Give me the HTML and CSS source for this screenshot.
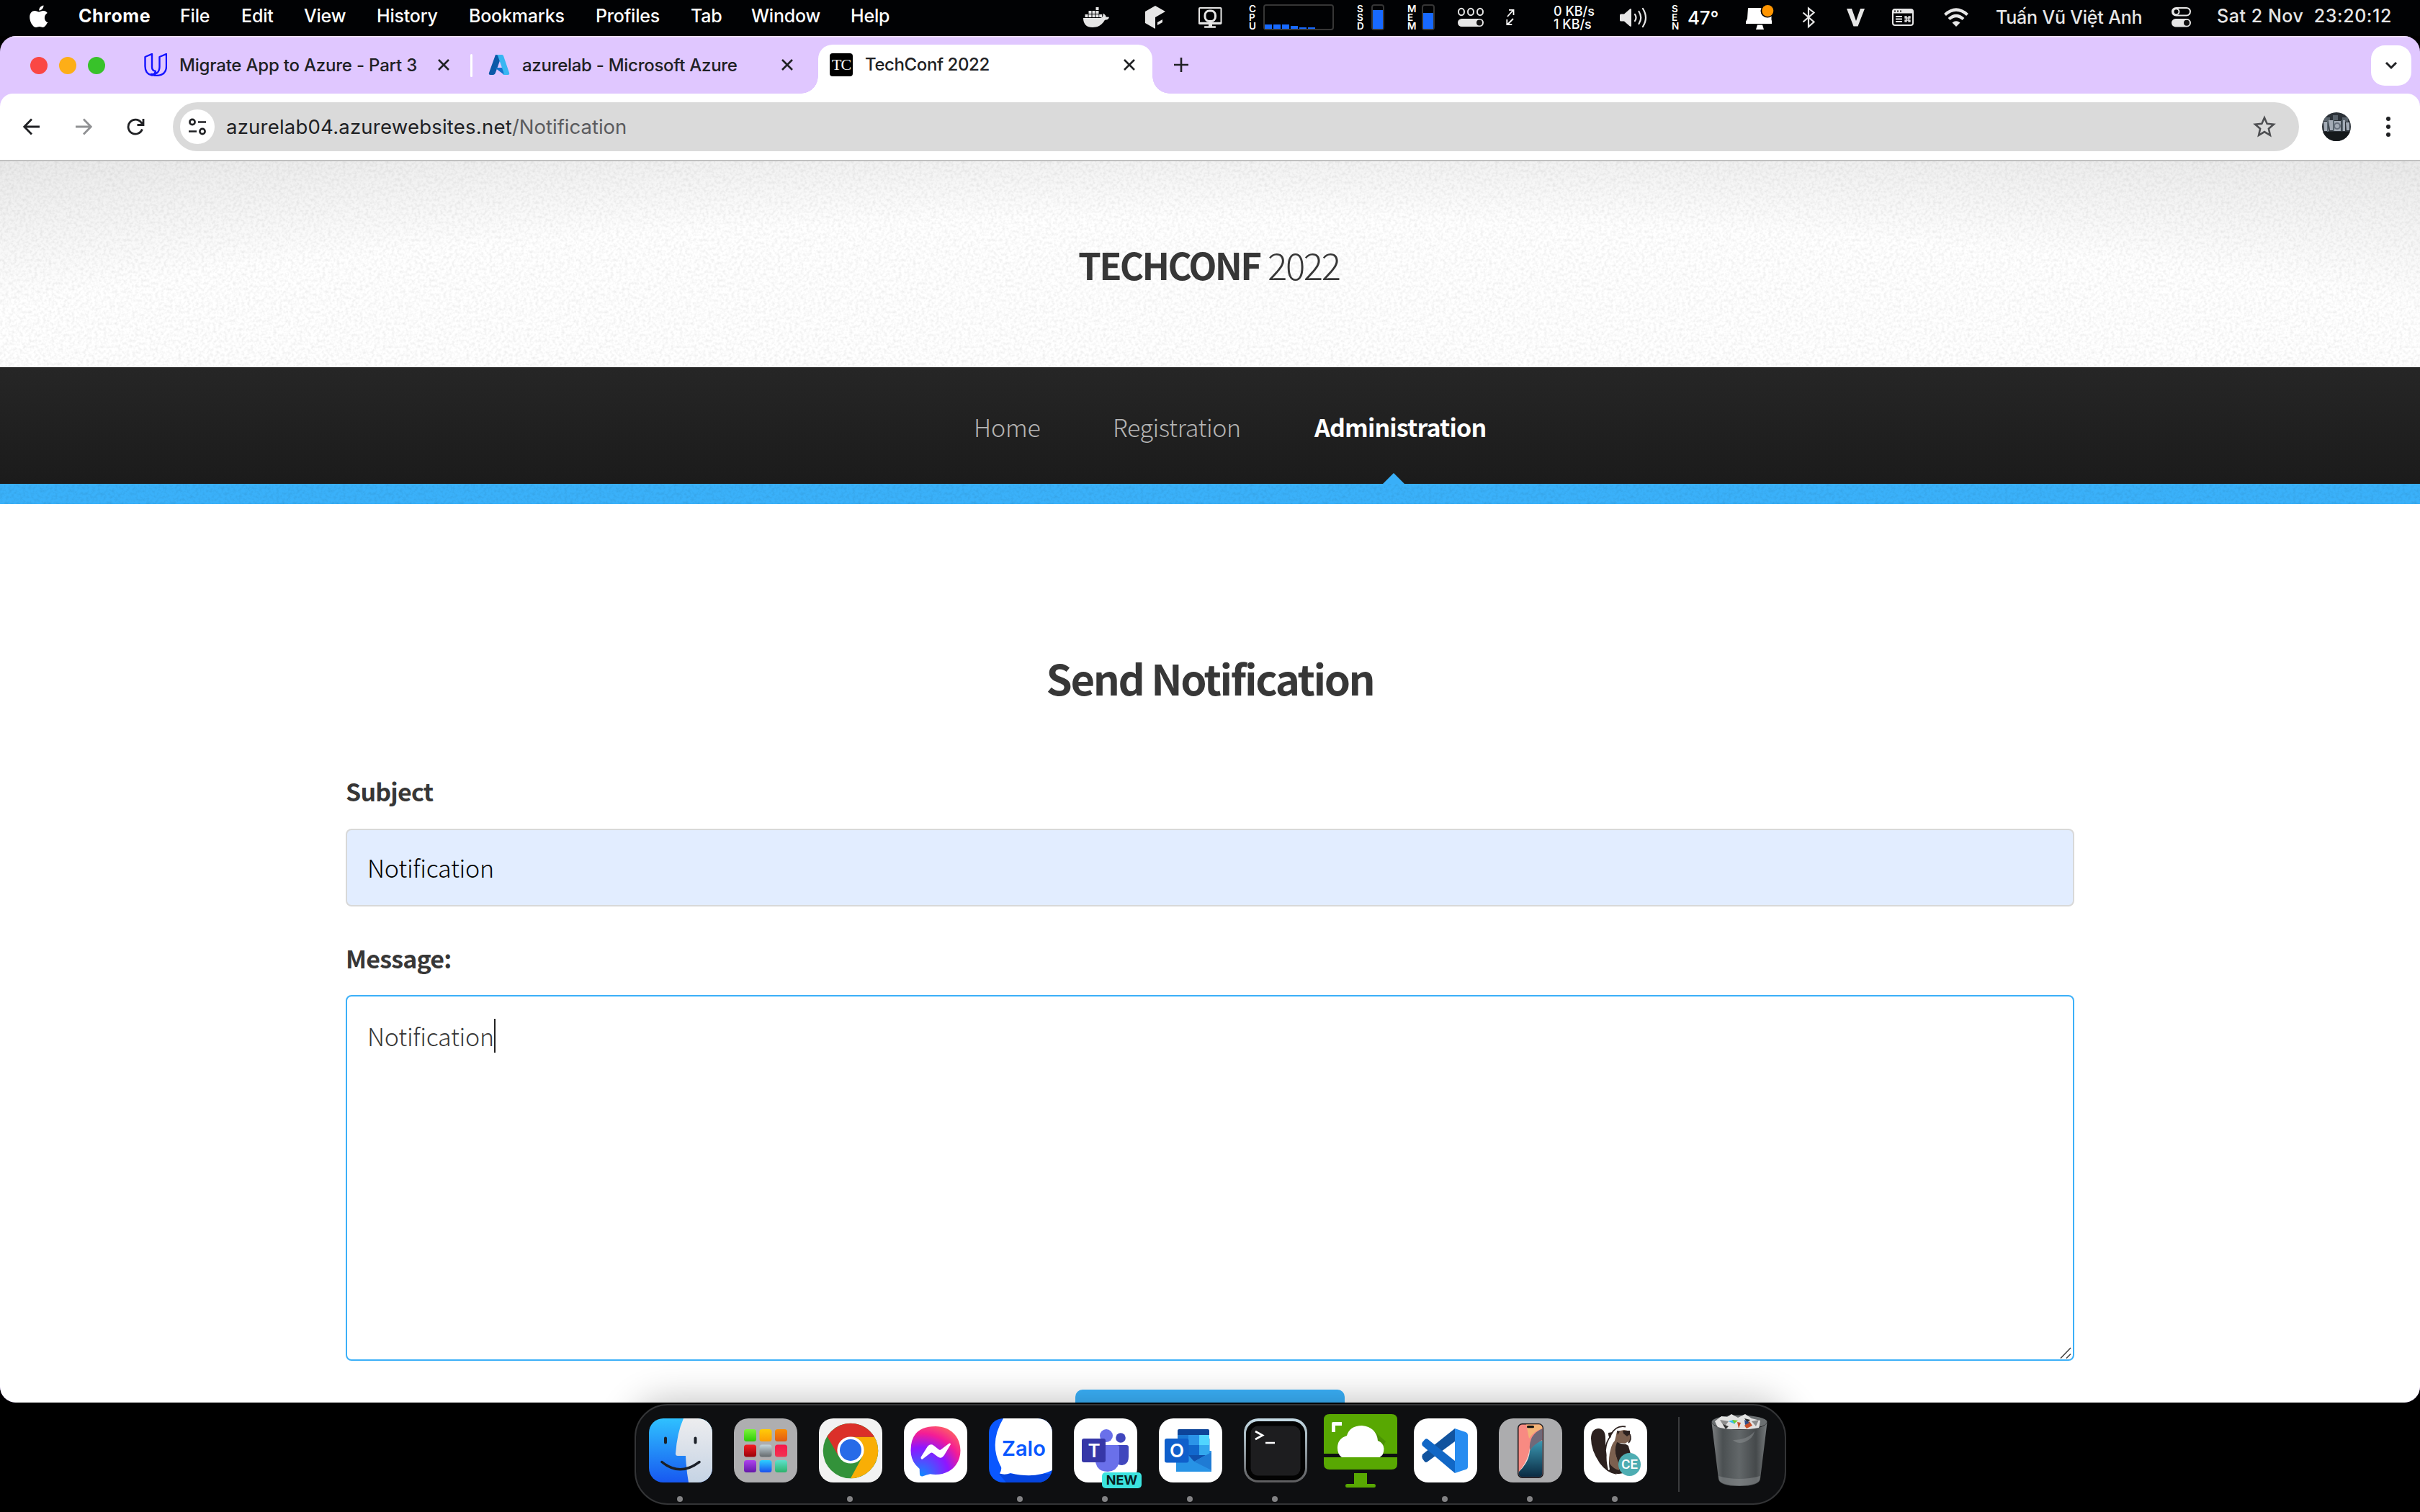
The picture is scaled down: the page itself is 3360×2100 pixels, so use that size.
FILE: index.html
```html
<!DOCTYPE html>
<html lang="en">
<head>
<meta charset="utf-8">
<title>TechConf 2022</title>
<link rel="stylesheet" href="styles.css">
</head>
<body>
<header class="menubar">
  <svg class="mi" width="28" viewBox="41 0 28 50" fill="#fff"><path d="M60.500 7.500c.3 3.600-3 7.200-6.200 7.100-.4-3.500 3-6.900 6.200-7.100zM65.500 32c-1.700 3.600-3.800 6-6 6-1.800 0-2.600-1-4.700-1s-3 1-4.700 1c-4.600 0-9-8.300-8.900-14.300 0-5.400 3.300-8.600 7-8.600 2.600 0 4.400 1.500 5.800 1.500 1.300 0 3.600-1.700 6.500-1.600 2 0 4 1 5.300 2.900-5.700 3.500-4.900 11.600.9 13.600-.3.200-.7.300-1.200.5z"/></svg>
  <b class="m-app">Chrome</b><span>File</span><span>Edit</span><span>View</span><span>History</span><span>Bookmarks</span><span>Profiles</span><span>Tab</span><span>Window</span><span>Help</span>
  <svg class="mi" width="37" viewBox="1504 0 37 50" fill="#e6e6e6"><path d="M1504 25h24c3-.6 4-3 3.500-6.500 3 1.500 4 3.500 4 5l4.500.3c-.8 3-3 4-6 4-4 7.500-10 10.200-17 10.200-8.500 0-13-4.500-13-13z"/><path d="M1506.500 20h4v4h-4zm5 0h4v4h-4zm5 0h4v4h-4zm5 0h4v4h-4zm4.700 0h4v4h-4zm-14.700-5h4v4h-4zm5 0h4v4h-4zm5 0h4v4h-4zm0-5h4v4h-4z"/></svg>
  <svg class="mi" width="28" viewBox="1590 0 28 50" fill="#e6e6e6"><path d="M1604 8l14 8-14 8v16l-14-8V16zM1607 31l7-4v4l-7 4z"/></svg>
  <svg class="mi" width="33" viewBox="1664 0 33 50" fill="none" stroke="#e6e6e6" stroke-width="2"><rect x="1665" y="11" width="30.500" height="22" rx="1"/><path d="M1665 32h30M1673 37.500h14" stroke-width="2.600" stroke-linecap="round"/><path d="M1680.500 33v4" stroke-width="5"/><rect x="1673" y="15" width="14.500" height="14.500" rx="6" stroke-width="3"/></svg>
  <div class="stat"><span class="vlabel">C<br>P<br>U</span><svg width="98" height="50" viewBox="1754 0 98 50"><rect x="1755" y="7" width="96" height="34" rx="3" fill="none" stroke="#363636" stroke-width="2"/><path fill="#1769ff" d="M1756 34h10v6h-10zm12 0h10v6h-10zm12 0h10v6h-10zm12 2h10v4h-10zm12 2h10v2h-10zm12 0h10v2h-10z"/></svg></div>
  <div class="stat"><span class="vlabel">S<br>S<br>D</span><svg width="18" height="50" viewBox="1904 0 18 50"><rect x="1905" y="7" width="16" height="34" rx="3" fill="none" stroke="#363636" stroke-width="2"/><path fill="#1769ff" d="M1906 14h14v26h-14z"/></svg></div>
  <div class="stat"><span class="vlabel">M<br>E<br>M</span><svg width="18" height="50" viewBox="1974 0 18 50"><rect x="1975" y="7" width="16" height="34" rx="3" fill="none" stroke="#363636" stroke-width="2"/><path fill="#1769ff" d="M1976 18h14v22h-14z"/></svg></div>
  <svg class="mi" width="37" viewBox="2024 0 37 50"><g fill="none" stroke="#e6e6e6" stroke-width="2"><ellipse cx="2029" cy="16.500" rx="4" ry="4.800"/><ellipse cx="2042" cy="16.500" rx="4" ry="4.800"/><ellipse cx="2055" cy="16.500" rx="4" ry="4.800"/></g><rect x="2024" y="26" width="36" height="11" rx="5.500" fill="#e6e6e6"/><circle cx="2054" cy="31.500" r="4" fill="#111"/></svg>
  <svg class="mi" width="12" viewBox="2091 0 12 50" fill="none" stroke="#fff" stroke-width="1.800"><path d="M2093 23l8-9M2095 13.800h6.500V21M2101 26l-8 8M2092.300 27v7.200h7"/></svg>
  <span class="net">0 KB/s<br>1 KB/s</span>
  <svg class="mi" width="40" viewBox="2248 0 40 50" fill="none" stroke="#e6e6e6" stroke-width="2.200" stroke-linecap="round"><path fill="#e6e6e6" stroke="none" d="M2249 21q0-1.500 1.500-1.500h4.500l8-7q2-1.300 2 1v22q0 2.300-2 1l-8-7h-4.500q-1.500 0-1.500-1.500z"/><path d="M2270 20q3 4.500 0 9M2275.500 16q5.500 8.500 0 17M2281 12q8 12.500 0 25"/></svg>
  <div class="stat sen"><span class="vlabel">S<br>E<br>N</span><span class="temp">47°</span></div>
  <svg class="mi" width="40" viewBox="2424 0 40 50"><path fill="#fff" d="M2427 11h20l13 18v4h-36v-3l2-4zM2440 34.500h7l2 6.500h-11z"/><path d="M2457 22v8" stroke="#fff" stroke-width="5"/><circle cx="2454" cy="15" r="9.500" fill="#000"/><circle cx="2454.300" cy="15" r="8" fill="#ff9500"/></svg>
  <svg class="mi" width="20" viewBox="2501 0 20 50" fill="none" stroke="#e6e6e6" stroke-width="2.200"><path d="M2503.500 17.500l15 13-7.500 6.500V11.500l7.500 6-15 13"/></svg>
  <svg class="mi" width="27" viewBox="2563 0 27 50" fill="#e6e6e6"><path d="M2564 12h7l6 17 6-17h6l-9.500 24.500h-6z"/></svg>
  <svg class="mi" width="32" viewBox="2626 0 32 50" fill="none" stroke="#e6e6e6" stroke-width="2"><rect x="2628" y="13" width="28" height="22" rx="3"/><path stroke-width="5" d="M2628 16h28"/><path stroke="#222" d="M2630 15.500h2m2 0h2m2 0h2"/><path d="M2632 23h9m-9 3.500h9m-9 3.500h9"/><path stroke-width="1.300" d="M2645 23h2v7h-2v-2h7v2h-2v-7h2v2h-7z"/></svg>
  <svg class="mi" width="36" viewBox="2698 0 36 50" fill="none" stroke="#e6e6e6" stroke-width="4.200"><path d="M2700.500 20.500q15.500-14 31 0M2706 26.500q10-9 20 0"/><path fill="#e6e6e6" stroke="none" d="M2710.500 31.500q5.500-4.500 11 0L2716 37z"/></svg>
  <span class="user">Tuấn Vũ Việt Anh</span>
  <svg class="mi" width="28" viewBox="3014 0 28 50" fill="none" stroke="#e6e6e6" stroke-width="2"><rect x="3016" y="11" width="25" height="10.500" rx="5.200"/><circle cx="3021.500" cy="16.200" r="4" /><rect x="3015" y="26" width="27" height="11.500" rx="5.700" fill="#e6e6e6" stroke="none"/><circle cx="3036" cy="31.700" r="4" fill="#111" stroke="none"/></svg>
  <span class="clock">Sat 2 Nov&nbsp; 23:20:12</span>
</header>

<main class="window">
  <div class="tabstrip">
    <div class="lights"><i class="red"></i><i class="amber"></i><i class="green"></i></div>
    <div class="tab tab-a">
      <svg width="32" height="32" viewBox="0 0 32 32" fill="none" stroke="#1414ff" stroke-width="2.400" stroke-linejoin="round"><path d="M1.500 5L11 1v18q0 5 5 6-2 5.500-5 5.500Q1.500 29 1.500 18zM21.500 5L31 1v17q0 12-13 13-6 0-8-2 11 1 11.500-10z"/></svg>
      <span class="t">Migrate App to Azure - Part 3</span>
      <svg class="x" width="18" height="18" viewBox="0 0 18 18"><path d="M2 2l14 14M16 2L2 16"/></svg>
    </div>
    <i class="sep"></i>
    <div class="tab tab-b">
      <svg width="30" height="30" viewBox="0 0 30 30"><path fill="#0c58a8" d="M10 1h9L10 26q-1 3-3 3H3q-3 0-2-3z"/><path fill="#1272cc" d="M9 19h15l3 10h-5z"/><path fill="#38b6f2" d="M11 1h8q1.500 0 2 1.500L29 26q1 3-2 3h-7q2-1 1-4L13 2z"/></svg>
      <span class="t">azurelab - Microsoft Azure</span>
      <svg class="x" width="18" height="18" viewBox="0 0 18 18"><path d="M2 2l14 14M16 2L2 16"/></svg>
    </div>
    <div class="tab tab-on">
      <span class="fav">TC</span>
      <span class="t">TechConf 2022</span>
      <svg class="x" width="18" height="18" viewBox="0 0 18 18"><path d="M2 2l14 14M16 2L2 16"/></svg>
    </div>
    <svg class="plus" width="22" height="22" viewBox="0 0 22 22"><path d="M11 1v20M1 11h20"/></svg>
    <div class="tabsearch"><svg width="18" height="12" viewBox="0 0 18 12"><path d="M2 2l7 7 7-7"/></svg></div>
  </div>
  <div class="toolbar">
    <svg class="nav-i" width="24" height="24" viewBox="0 0 24 24"><path d="M23 12H2M12 1.500L1.800 12 12 22.500"/></svg>
    <svg class="nav-i off" width="24" height="24" viewBox="0 0 24 24"><path d="M1 12h21M12 1.500L22.200 12 12 22.500"/></svg>
    <svg class="nav-i" width="25" height="25" viewBox="0 0 25 25"><path d="M21.500 15.500A10 10 0 1 1 20 6l2.500 3M23 1v8.500h-8.500"/></svg>
    <div class="omnibox">
      <div class="site"><svg width="26" height="26" viewBox="0 0 26 26" fill="none" stroke="#202124" stroke-width="2.600"><circle cx="6" cy="6.500" r="3.600"/><path d="M14 6.500h11M1 19.500h11"/><circle cx="20" cy="19.500" r="3.600"/></svg></div>
      <span class="url"><span class="host">azurelab04.azurewebsites.net</span><span class="path">/Notification</span></span>
      <svg class="star" width="32" height="32" viewBox="0 0 32 32"><path d="M16 3.500l3.700 8.400 9.100.9-6.900 6 2 9-7.900-4.700L8.100 27.800l2-9-6.900-6 9.100-.9z"/></svg>
    </div>
    <svg class="avatar" width="40" height="40" viewBox="0 0 40 40"><defs><clipPath id="av"><circle cx="20" cy="20" r="20"/></clipPath></defs><g clip-path="url(#av)"><path fill="#2b3138" d="M0 0h40v40H0z"/><path fill="#59626b" d="M3 7h8v5H3zm12-3h7v7h-7zm13 3h8v6h-8z"/><path fill="#a3abb6" d="M2 13h5l3 13H3zm7-2h6v14h-4zm8 1h9v14h-9zm11-1h4v15h-4zm5 3h5v11h-4z"/><path fill="#15191c" d="M0 27h40v13H0z"/><circle cx="21" cy="19" r="4" fill="none" stroke="#68717e" stroke-width="2"/><path stroke="#59656f" stroke-width="2" d="M8 12v15m8-17v16m12-15v15"/></g></svg>
    <div class="kebab"><i></i><i></i><i></i></div>
  </div>
  <section class="page">
    <div class="masthead"><h1><b>TECHCONF</b><span class="year">2022</span></h1></div>
    <nav class="nav"><a class="n1">Home</a><a class="n2">Registration</a><a class="n3">Administration</a></nav>
    <div class="stripe"></div>
    <div class="content">
      <h2>Send Notification</h2>
      <label>Subject</label>
      <div class="field subject"><span>Notification</span></div>
      <label>Message:</label>
      <div class="field message"><span>Notification</span><i class="caret"></i>
        <svg class="grip" width="16" height="16" viewBox="0 0 16 16"><path d="M1 15.500L15 1M9 15.500l6-6"/></svg></div>
      <div class="button"></div>
    </div>
  </section>
</main>

<footer class="dock">
  <div class="app run"><svg viewBox="0 0 88 89"><defs><linearGradient id="fb" x2="0" y2="1"><stop stop-color="#2fc1ff"/><stop offset="1" stop-color="#1758f0"/></linearGradient><linearGradient id="fw" x2="0" y2="1"><stop stop-color="#ededef"/><stop offset="1" stop-color="#c5d3e4"/></linearGradient><clipPath id="sq"><rect width="88" height="89" rx="20"/></clipPath></defs><g clip-path="url(#sq)"><path fill="url(#fb)" d="M0 0h88v89H0z"/><path fill="url(#fw)" d="M48 0h40v89H55q-3-16-4-37H40q-3 0-3-3Q39 20 48 0z"/></g><g fill="none" stroke="#1b2028" stroke-width="3.500" stroke-linecap="round"><path d="M23 27.500v6M64.500 27.500v6" stroke-width="4"/><path d="M18 60.500Q43 81 70 60.500"/></g></svg></div>
  <div class="app"><svg viewBox="0 0 88 89"><defs><linearGradient id="c1" x2="0" y2="1"><stop stop-color="#7df33c"/><stop offset="1" stop-color="#2ccc08"/></linearGradient><linearGradient id="c2" x2="0" y2="1"><stop stop-color="#ffcc08"/><stop offset="1" stop-color="#fb9c06"/></linearGradient><linearGradient id="c3" x2="0" y2="1"><stop stop-color="#f98e06"/><stop offset="1" stop-color="#e25a14"/></linearGradient><linearGradient id="c4" x2="0" y2="1"><stop stop-color="#f51d25"/><stop offset="1" stop-color="#980208"/></linearGradient><linearGradient id="c5" x2="0" y2="1"><stop stop-color="#c4d6de"/><stop offset="1" stop-color="#64696c"/></linearGradient><linearGradient id="c6" x2="0" y2="1"><stop stop-color="#f7164a"/><stop offset="1" stop-color="#f23352"/></linearGradient><linearGradient id="c7" x2="0" y2="1"><stop stop-color="#ae42ee"/><stop offset="1" stop-color="#6418a8"/></linearGradient><linearGradient id="c8" x2="0" y2="1"><stop stop-color="#2cd0ff"/><stop offset="1" stop-color="#1b50ee"/></linearGradient><linearGradient id="c9" x2="0" y2="1"><stop stop-color="#5de0cb"/><stop offset="1" stop-color="#2cb26b"/></linearGradient></defs><rect width="88" height="89" rx="20" fill="#aeaeb0"/><rect x="14" y="15" width="17" height="17" rx="3.500" fill="url(#c1)"/><rect x="35.500" y="15" width="17" height="17" rx="3.500" fill="url(#c2)"/><rect x="57" y="15" width="17" height="17" rx="3.500" fill="url(#c3)"/><rect x="14" y="36.500" width="17" height="17" rx="3.500" fill="url(#c4)"/><rect x="35.500" y="36.500" width="17" height="17" rx="3.500" fill="url(#c5)"/><rect x="57" y="36.500" width="17" height="17" rx="3.500" fill="url(#c6)"/><rect x="14" y="58" width="17" height="17" rx="3.500" fill="url(#c7)"/><rect x="35.500" y="58" width="17" height="17" rx="3.500" fill="url(#c8)"/><rect x="57" y="58" width="17" height="17" rx="3.500" fill="url(#c9)"/></svg></div>
  <div class="app run"><svg viewBox="0 0 88 89"><rect width="88" height="89" rx="20" fill="#f2f2f2"/><circle cx="44" cy="45" r="38.300" fill="#33923a"/><path fill="#f9ae05" d="M44 83.300a38.300 38.300 0 0 0 33-57.500H44l16 28z"/><path fill="#db3029" d="M11.500 25A38.300 38.300 0 0 1 77 25.800H44L27 52z"/><circle cx="44" cy="44" r="18.600" fill="#fff"/><circle cx="44" cy="44" r="15" fill="#276be8"/></svg></div>
  <div class="app"><svg viewBox="0 0 88 89"><defs><radialGradient id="ms" cx=".2" cy="1" r="1.150"><stop stop-color="#0d8bff"/><stop offset=".5" stop-color="#8e16ff"/><stop offset=".75" stop-color="#f41d95"/><stop offset="1" stop-color="#ff6a5c"/></radialGradient></defs><rect width="88" height="89" rx="20" fill="#fff"/><path fill="url(#ms)" d="M44 11c20 0 34.500 14 34.500 33.500S64 78 44 78q-4 0-7.500-.8-5 1-10 3-4 1-4.500-2.200l-.3-8Q9.500 60 9.500 44.500 9.500 11 44 11z"/><path fill="#fff" d="M23.500 54l9-14.500q4-5.500 9-1.800l7 5.500q1.500 1 3 0l10.500-8q2.500-1.500 3 .8L56 51q-4 6-9 2.200l-7-5.300q-1.500-1-3 0l-11 8.500q-2.500 1.300-2.500-2.400z"/></svg></div>
  <div class="app run"><svg viewBox="0 0 88 89"><g clip-path="url(#sq)"><path fill="#0a57ff" d="M0 0h88v89H0z"/><path fill="#0545df" d="M14 77h74v12H24z"/><path fill="#fff" d="M20 0h68v72Q64 84 30 76q-8 3-15 .5 3-5 2-9Q-1 35 20 0z"/></g></svg><span class="zalo">Zalo</span></div>
  <div class="app run"><svg viewBox="0 0 88 89"><rect width="88" height="89" rx="20" fill="#fff"/><circle cx="65" cy="27" r="6.800" fill="#4046bd"/><path fill="#4046bd" d="M58 37h15q3 0 3 3v13q0 11-9 12-6 0-9-4z"/><circle cx="45" cy="24" r="9" fill="#6a70ea"/><path fill="#6a70ea" d="M30 37h30q3 0 3 3v18q-1 15-16 16-15 0-17-14z"/><rect x="11" y="28" width="33" height="33" rx="3" fill="#3637a8"/></svg><span class="tile-t">T</span><span class="new">NEW</span></div>
  <div class="app run"><svg viewBox="0 0 88 89"><rect width="88" height="89" rx="20" fill="#fff"/><path fill="#2b94e8" d="M24 50V28h49v46H24z"/><path fill="#0d4499" d="M26 17q0-2 2-2h40q2 0 2 2v6H26z"/><path fill="#1b78d4" d="M26 23h15v14H26z"/><path fill="#2b94e8" d="M41 23h15v14H41z"/><path fill="#50d5ff" d="M56 23h14v14H56z"/><path fill="#fff" d="M70.500 23h3v22h-3z"/><path fill="#1167cc" d="M26 37h30v14H41z"/><path fill="#33a8ee" d="M56 37h14v14H56z"/><path fill="#0f50ad" d="M41 51h24L49 60z"/><path fill="#2793e6" d="M41 55l32 19H26q-2 0-2-2v-8z"/><path fill="#1f7bd4" d="M73 47v25L49 60z"/><rect x="8" y="28" width="33.500" height="33.500" rx="3" fill="#0f5fcb"/></svg><span class="tile-o">O</span></div>
  <div class="app run"><svg viewBox="0 0 88 89"><defs><linearGradient id="tm" x2="0" y2="1"><stop stop-color="#c5dbe6"/><stop offset="1" stop-color="#5d5d5f"/></linearGradient></defs><rect width="88" height="89" rx="20" fill="url(#tm)"/><rect x="3" y="4" width="82" height="82" rx="17" fill="#030303"/><rect x="9.500" y="10.500" width="69" height="69" rx="10" fill="#1d1d1f"/><path fill="none" stroke="#fff" stroke-width="2.600" d="M16 18l10 5.500L16 29M30 34h13"/></svg></div>
  <div class="app wide"><svg viewBox="0 0 102 103"><path fill="#58a802" d="M8 0h86q8 0 8 8v47H0V8q0-8 8-8zM0 60h102v9q0 8-8 8H8q-8 0-8-8zM42 82h18v15h10q2 0 2 2.500t-2 2.500H32q-2 0-2-2.500t2-2.500h10z"/><path fill="#4b9104" d="M70 24l16 14-6 10H66z"/><path fill="#fff" d="M11 25V13q0-2 2-2h12v5H16v9zM25 60q-6-4-6-13 0-13 13-17 4-14 21-14 20 2 22 21 8 3 8.500 11 0 9-6 12z"/></svg></div>
  <div class="app run"><svg viewBox="0 0 88 89"><rect width="88" height="89" rx="20" fill="#fff"/><path fill="#11539e" d="M12 50L57 14v18L18.500 60.500q-2 1-3.500-.5l-3-4q-1.500-3 0-6z"/><path fill="#1167c6" d="M12 38q-1.500-3 0-5l3.500-4q2-1.500 4 0L57 59v17z"/><path fill="#278cf0" d="M57 14l15 5q3 1.500 3 4v44q0 3-3 4l-15 5z"/></svg></div>
  <div class="app run"><svg viewBox="0 0 88 89"><defs><clipPath id="ip"><rect x="27.500" y="8.500" width="33" height="73" rx="5"/></clipPath><linearGradient id="ib" x2="0" y2="1"><stop stop-color="#3c9ab4"/><stop offset="1" stop-color="#08263e"/></linearGradient></defs><rect width="88" height="89" rx="20" fill="#acacae"/><rect x="26" y="7" width="36" height="76" rx="6.500" fill="#121316"/><g clip-path="url(#ip)"><path fill="#f88a82" d="M27 8h34v74H27z"/><path fill="#f3b477" d="M38 8h23v6q-12 3-19 14z"/><path fill="#706979" d="M61 14v15L43 44q-2-22 18-30z"/><path fill="#f1dedb" d="M27 75q14-16 16-34v9L34 80z"/><path fill="url(#ib)" d="M61 30Q48 36 43 45q-1 16-16 30v8h34z"/></g><rect x="39" y="10" width="10" height="3.300" rx="1.600" fill="#111"/></svg></div>
  <div class="app run"><svg viewBox="0 0 88 89"><rect width="88" height="89" rx="20" fill="#fff"/><path fill="#2c211f" d="M20 14q10 0 10 14 0 14 2 24 4 18 14 26-14-2-24-16Q10 44 10 28q0-13 10-14z"/><path fill="none" stroke="#2c211f" stroke-width="1.800" d="M38 22q7-13 20-10.500M30 44q1-12 7-19"/><path fill="#2c211f" d="M34 20l6-1-3 8q-3 0-3-7zM33 70q8 8 16 7l6-1-6-30H34q-3 12-1 24z"/><path fill="#fff" d="M34 72q-5-20 0-34l4-5 5 4q-7 8-8 22 0 8 1 12z"/><path fill="#7c604f" d="M46 18l10-2q10 0 9 13-1 7-6 6-6-1-12-1-6 10 2 30v8q-8-2-13-9-2-10 1-19 2-9 6-13 2-8 3-13z"/><path fill="#2c211f" d="M54 17h10v5l-4 3-5-4zM46 17l4 1-3 5zM46 33q9 4 15 2l4 14-3 20-12-7q-10-14-4-29z"/><path fill="#fff" d="M57 35l5-3v6z"/><path stroke="#2c211f" stroke-width="1.500" fill="none" d="M64 22q3 7-2 12"/><ellipse cx="63.500" cy="64" rx="15.500" ry="16" fill="#4eadb2"/></svg><span class="ce">CE</span></div>
  <i class="divider"></i>
  <div class="trash"><svg width="78" height="103" viewBox="0 0 78 103"><defs><linearGradient id="tr"><stop stop-color="#7b7e80"/><stop offset=".2" stop-color="#4b5052"/><stop offset=".5" stop-color="#626769"/><stop offset=".8" stop-color="#45494b"/><stop offset="1" stop-color="#777b7d"/></linearGradient></defs><ellipse cx="39" cy="13" rx="38.500" ry="9.500" fill="#6b6f71"/><path fill="#e2e2e2" d="M5 12l9-7 8 1 6-4 9 5 10-5 9 6 12 3-2 12H10z"/><path fill="#8d8d8d" d="M12 10l12 2-6 8zm44 2l10-2-4 9z"/><path fill="#333" d="M16 16l8 3-4 4zm30-8l8 2-4 4z"/><path fill="#35bcee" d="M24 12l7-2 2 6z"/><path fill="#6fce30" d="M29 10l8 1-5 4z"/><path fill="#c7502a" d="M36 13l5 1-3 8zm10 5l7-6 4 6-8 4z"/><path fill="#2c4d8b" d="M46 10l7 4-6 3z"/><path fill="url(#tr)" d="M.5 14Q5 23 39 23.500 73 23 77.500 14L68 92q-1 10-29 10T10 92z"/><path fill="#8b9092" opacity=".5" d="M10 88q28 8 58 0l-1 5q-2 8-28 8t-28-8zM30 38q20 0 30-12-2 10-14 15-10 3-16-3z"/></svg></div>
</footer>
</body>
</html>
```
FILE: styles.css
```css
* { box-sizing: border-box; }
body { margin: 0; width: 3360px; height: 2100px; overflow: hidden; background: #000; font-family: Inter, "Noto Sans", sans-serif; position: relative; }
i { display: block; }
svg { display: block; flex: none; }

.menubar { height: 50px; padding-left: 41px; background: #010204; color: #fff; display: grid; grid-template-columns: 68px 141px 85px 87px 101px 128px 176px 132px 84px 138px 323px 86px 74px 70px 150px 70px 70px 67px 66px 91px 73px 103px 77px 62px 63px 72px 73px 243px 64px 1fr; font-size: 25px; line-height: 45px; white-space: nowrap; font-weight: 500; letter-spacing: -.2px; }
.menubar b { font-weight: 700; letter-spacing: .6px; }
.mi { height: 50px; }
.stat { display: flex; justify-content: flex-start; }
.vlabel { width: 20px; font-size: 13.5px; line-height: 12px; padding-top: 6px; font-weight: 600; letter-spacing: 0; }
.net { font-size: 18px; line-height: 18px; padding-top: 7px; letter-spacing: 0; }
.sen .vlabel { width: 22px; }
.temp { line-height: 49px; font-size: 26px; }
.user, .clock { color: #e6e6e6; }
.user { line-height: 48px; }
.clock { letter-spacing: .55px; }

.window { height: 1898px; border-radius: 22px; overflow: hidden; background: #e0c7ff; display: flex; flex-direction: column; }
.tabstrip { height: 80px; flex: none; display: flex; align-items: center; border-top: 2px solid #ecdcff; font-size: 24px; font-weight: 500; color: #202124; white-space: nowrap; }
.lights { display: flex; gap: 16px; margin-left: 42px; width: 158px; }
.lights i { width: 24px; height: 24px; border-radius: 50%; }
.red { background: #fa4744; }
.amber { background: #fdae17; }
.green { background: #38c22a; }
.tab { display: flex; align-items: center; padding-bottom: 2px; }
.tab-a { width: 453px; letter-spacing: -.2px; }
.tab-b { width: 458px; margin-left: 22px; letter-spacing: -.28px; }
.tab-on { position: relative; width: 464px; height: 68px; margin-top: 10px; padding: 0 23px 13px 16px; background: #fff; border-radius: 20px 20px 0 0; letter-spacing: -.4px; }
.tab-on::before, .tab-on::after { content: ""; position: absolute; bottom: 0; width: 24px; height: 24px; }
.tab-on::before { left: -24px; background: radial-gradient(circle at 0 0, transparent 23.500px, #fff 24px); }
.tab-on::after { right: -24px; background: radial-gradient(circle at 100% 0, transparent 23.500px, #fff 24px); }
.t { margin-left: 17px; flex: 1; }
.tab-a .t { width: 358px; flex: none; }
.tab-b .t { width: 359px; flex: none; }
.x, .plus, .tabsearch svg { fill: none; stroke: #202124; stroke-width: 2.6; }
.sep { width: 3px; height: 32px; background: #fff; border-radius: 2px; }
.fav { width: 32px; height: 32px; background: #000; color: #fff; border-radius: 4px; font: 22px/32px "Liberation Serif", serif; text-align: center; letter-spacing: -1px; }
.plus { margin: 0 0 2px 29px; }
.tabsearch { width: 56px; height: 56px; margin: 0 12px 0 auto; border-radius: 19px; background: #fff; display: flex; align-items: center; justify-content: center; }
.tabsearch svg { stroke-width: 3; }

.toolbar { height: 94px; flex: none; background: #fff; border-bottom: 2px solid #c0c0c0; border-radius: 18px 18px 0 0; display: flex; align-items: center; padding-left: 32px; }
.nav-i { fill: none; stroke: #202124; stroke-width: 2.8; margin-right: 48px; }
.nav-i.off { stroke: #909193; }
.nav-i:nth-child(3) { margin-right: 39px; }
.omnibox { width: 2952px; height: 68px; border-radius: 34px; background: #dadada; display: flex; align-items: center; padding: 0 32px 0 10px; }
.site { width: 48px; height: 48px; border-radius: 50%; background: #fff; display: flex; align-items: center; justify-content: center; }
.url { margin-left: 16px; flex: 1; font-size: 27.5px; color: #202124; }
.host { letter-spacing: .22px; }
.path { color: #5a5b5e; }
.star { fill: none; stroke: #4e4f52; stroke-width: 2.600; }
.avatar { margin-left: 32px; }
.kebab { margin-left: 49px; display: flex; flex-direction: column; gap: 5px; }
.kebab i { width: 6px; height: 6px; border-radius: 50%; background: #202124; }

.page { height: 1724px; background: #fff; color: #373737; font-family: "Noto Sans CJK SC", sans-serif; font-weight: 300; border-radius: 0 0 22px 22px; overflow: hidden; }
.masthead { height: 286px; background: url("data:image/svg+xml,%3Csvg xmlns='http://www.w3.org/2000/svg' width='400' height='400'%3E%3Cfilter id='n'%3E%3CfeTurbulence type='fractalNoise' baseFrequency='.25' numOctaves='3' stitchTiles='stitch'/%3E%3CfeColorMatrix values='0 0 0 0 0 0 0 0 0 0 0 0 0 0 0 .14 0 0 0 -.055'/%3E%3C/filter%3E%3Crect width='400' height='400' filter='url(%23n)'/%3E%3C/svg%3E"), radial-gradient(ellipse 2400px 300px at 50% 112%, #fff 0, #fff 80%, #e8e8e8 130%); }
h1 { margin: 0; padding-left: 1497px; display: flex; font-size: 51px; line-height: 74px; padding-top: 106px; font-weight: 300; letter-spacing: -2.400px; }
h1 b { width: 263px; font-weight: 700; letter-spacing: -2.700px; }
.nav { height: 162px; background: linear-gradient(#262626, #1b1b1b); display: flex; padding-left: 1352px; font-size: 34px; line-height: 50px; padding-top: 58px; color: #b4b4b4; position: relative; }
.nav::after { content: ""; position: absolute; left: 1920px; bottom: 0; border: 15px solid transparent; border-top: 0; border-bottom-color: #39aff8; }
.n1 { width: 193px; letter-spacing: -.2px; }
.n2 { width: 280px; letter-spacing: -.4px; }
.n3 { color: #fff; font-weight: 700; letter-spacing: -.85px; }
.stripe { height: 28px; background: url("data:image/svg+xml,%3Csvg xmlns='http://www.w3.org/2000/svg' width='400' height='28'%3E%3Cfilter id='n'%3E%3CfeTurbulence type='fractalNoise' baseFrequency='.25' numOctaves='3' stitchTiles='stitch'/%3E%3CfeColorMatrix values='0 0 0 0 0 0 0 0 0 0 0 0 0 0 0 .14 0 0 0 -.055'/%3E%3C/filter%3E%3Crect width='400' height='28' filter='url(%23n)'/%3E%3C/svg%3E"), #3ab1fa; }
.content { width: 2400px; margin: 0 auto; padding-top: 191px; font-size: 34px; }
h2 { margin: 0; text-align: center; font-size: 58px; line-height: 100px; font-weight: 700; letter-spacing: -2.400px; }
label { display: block; font-weight: 700; line-height: 50px; letter-spacing: -.8px; }
h2 + label { padding-top: 83px; }
.field { border: 2px solid #d8d8d8; border-radius: 8px; padding-left: 28px; display: flex; letter-spacing: -.27px; }
.subject { margin-top: 27px; height: 108px; background: #e2edff; color: #000; line-height: 103px; }
.subject + label { padding-top: 47px; }
.message { margin-top: 26px; height: 508px; border-color: #3cb0f8; position: relative; padding-top: 31px; line-height: 48px; }
.caret { width: 2px; height: 47px; background: #222; }
.grip { position: absolute; right: 2px; bottom: 1px; stroke: #444; stroke-width: 1.600; fill: none; }
.button { width: 374px; height: 100px; margin: 40px auto 0; border-radius: 10px; background: #3ab1fa; }

.dock { position: absolute; left: 881px; top: 1950px; width: 1599px; height: 140px; border: 2px solid #333436; border-radius: 46px; background: #0e0f11; box-shadow: 0 0 50px 6px rgba(0,0,0,.24); display: flex; align-items: flex-start; padding: 18px 0 0 18px; }
.app { position: relative; width: 88px; height: 89px; margin-right: 30px; flex: none; }
.app svg { width: 88px; height: 89px; }
.app.wide { width: 102px; height: 103px; margin: -6px 23px 0 -7px; }
.app.wide svg { width: 102px; height: 103px; }
.run::after { content: ""; position: absolute; left: 39px; top: 108px; width: 8px; height: 8px; border-radius: 50%; background: #828284; }
.zalo, .tile-t, .tile-o, .new, .ce { position: absolute; font-weight: 600; line-height: 30px; white-space: nowrap; }
.zalo { left: 18px; top: 27px; font-size: 29px; color: #0a57ff; }
.tile-t, .tile-o { color: #fff; width: 34px; text-align: center; font-size: 26px; top: 30px; }
.tile-t { left: 11px; }
.tile-o { left: 8px; }
.new { left: 39px; top: 75px; width: 55px; height: 22px; line-height: 22px; border-radius: 5px; background: #3be3df; color: #06201f; font-size: 18px; font-weight: 700; text-align: center; }
.ce { left: 48px; top: 49px; width: 31px; text-align: center; color: #fff; font-family: Roboto, sans-serif; font-size: 19px; font-weight: 500; }
.divider { width: 2px; height: 104px; margin: -2px 0 0 13px; background: #3a3b3d; }
.trash { margin: -8px 0 0 44px; }
```
